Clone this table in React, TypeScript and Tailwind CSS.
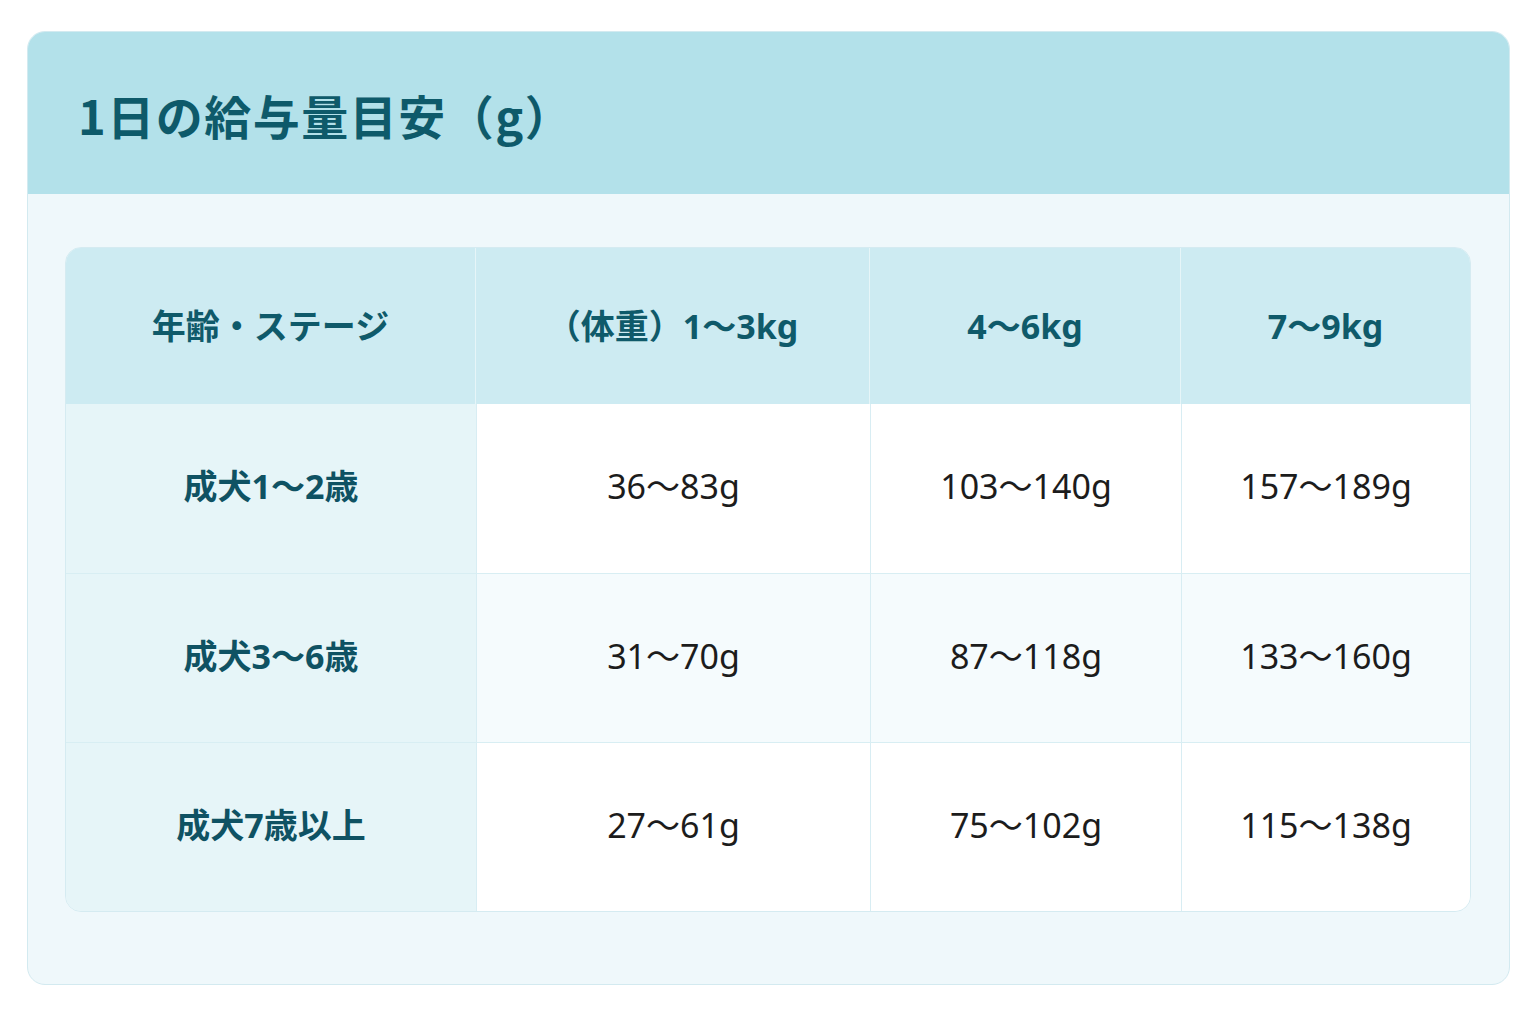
import React from "react";

const font = { fontFamily: '"Noto Sans", "Noto Sans CJK JP", sans-serif' };
const cjk = { fontFamily: '"Noto Sans CJK JP", "Noto Sans", sans-serif' };

const cols = ["（体重）1〜3kg", "4〜6kg", "7〜9kg"];
const rows = [
  { label: "成犬1〜2歳", vals: ["36〜83g", "103〜140g", "157〜189g"], alt: false },
  { label: "成犬3〜6歳", vals: ["31〜70g", "87〜118g", "133〜160g"], alt: true },
  { label: "成犬7歳以上", vals: ["27〜61g", "75〜102g", "115〜138g"], alt: false },
];

export default function App() {
  return (
    <div className="w-[1536px] h-[1024px] bg-white pt-[31px] pl-[27px]" style={font}>
      <div className="w-[1483px] h-[954px] rounded-[18px] border border-[#d3eaf0] bg-[#eff8fb] overflow-hidden flex flex-col">
        <div className="h-[162px] bg-[#b3e1ea] flex items-center pl-[50px] pt-[2px]">
          <h1 className="text-[47px] font-bold text-[#0e5a6a] leading-none tracking-[1.5px]" style={cjk}>
            1日の給与量目安（g）
          </h1>
        </div>
        <div className="pt-[53px] pl-[37px]">
          <div className="w-[1406px] rounded-[16px] border border-[#d5ebf1] overflow-hidden grid grid-cols-[410px_394px_311px_1fr]">
            <div className="h-[156px] bg-[#cdebf2] flex items-center justify-center text-[34px] font-bold text-[#0f5a6a] border-r border-[#e6f5f8]">
              年齢・ステージ
            </div>
            {cols.map((c, i) => (
              <div
                key={c}
                className={`h-[156px] bg-[#cdebf2] flex items-center justify-center text-[34px] font-bold text-[#0f5a6a] ${i < 2 ? "border-r border-[#e6f5f8]" : ""}`}
              >
                {c}
              </div>
            ))}
            {rows.map((r, ri) => (
              <React.Fragment key={r.label}>
                <div
                  className={`h-[169px] bg-[#e6f5f8] flex items-center justify-center text-[34px] font-bold text-[#0f5263] pb-[4px] ${ri > 0 ? "border-t border-[#d8eef3]" : ""}`}
                >
                  {r.label}
                </div>
                {r.vals.map((v) => (
                  <div
                    key={v}
                    className={`h-[169px] ${r.alt ? "bg-[#f5fbfd]" : "bg-white"} flex items-center justify-center text-[34px] text-[#1c1c1c] pb-[4px] border-l border-[#d8edf3] ${ri > 0 ? "border-t border-t-[#d8eef3]" : ""}`}
                  >
                    {v}
                  </div>
                ))}
              </React.Fragment>
            ))}
          </div>
        </div>
      </div>
    </div>
  );
}
